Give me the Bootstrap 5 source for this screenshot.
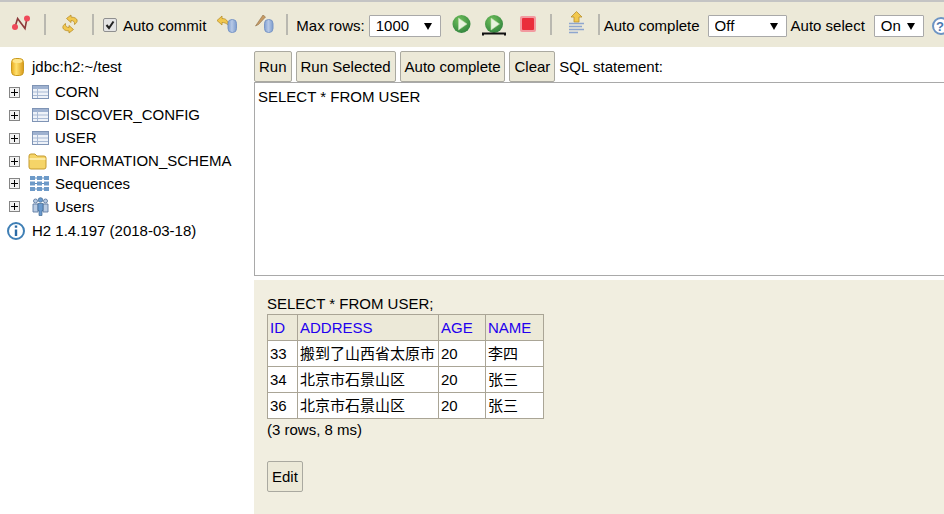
<!DOCTYPE html>
<html lang="en">
<head>
<meta charset="utf-8">
<title>H2 Console</title>
<link href="https://cdn.jsdelivr.net/npm/bootstrap@5.3.0/dist/css/bootstrap.min.css" rel="stylesheet">
<style>
html,body{height:100%;}
body{font:15px/20px "Liberation Sans",Arial,sans-serif;color:#000;background:#fff;overflow:hidden;}
.shell{height:514px;width:944px;}
.tbar{height:47px;background:#ece9d8;border-top:2px solid #c4c4c4;padding-top:3px;white-space:nowrap;}
.tbar svg{display:block;flex:none;}
.tbar .ico{margin-bottom:4px;}
.tbar .ico-low{margin-bottom:2px;}
.tbar .ico-up{margin-bottom:6px;}
.tbar .ico-help{margin-bottom:1px;}
.l4{margin-left:4px}.l5{margin-left:5px}.l6{margin-left:6px}.l8{margin-left:8px}.l9{margin-left:9px}.l10{margin-left:10px}.l11{margin-left:11px}.l12{margin-left:12px}.l13{margin-left:13px}.l14{margin-left:14px}.l16{margin-left:16px}.l17{margin-left:17px}
.vsep{width:2px;height:21px;background:#b9b8b0;flex:none;margin-bottom:4px;}
.chk{width:14px;height:14px;border:1px solid #8f8f8f;border-radius:2px;background:#e4e4e4;flex:none;margin-bottom:2px;}
.dd{position:relative;height:22px;background:#fff;border:1px solid #a9a9a9;flex:none;padding-left:6px;line-height:20px;border-radius:1px;}
.dd select{appearance:none;border:0;background:transparent;padding:0;width:100%;height:100%;font:inherit;outline:0;color:#000;}
.dd i{position:absolute;top:7px;right:8px;border-left:4px solid transparent;border-right:4px solid transparent;border-top:7px solid #000;}
.w72{width:72px}.w79{width:79px}.w50{width:50px}
.side{width:254px;flex:none;padding-top:7px;}
.node{display:flex;align-items:center;white-space:nowrap;}
.plus{position:relative;width:11px;height:11px;border:1px solid #858585;background:#f2f2f2;flex:none;margin-left:9px;}
.plus::before{content:"";position:absolute;left:1px;right:1px;top:4px;height:1px;background:#000;}
.plus::after{content:"";position:absolute;top:1px;bottom:1px;left:4px;width:1px;background:#000;}
.slot{width:35px;flex:none;display:flex;}
.root{width:32px;}
.p7{padding-left:7px}.p8{padding-left:8px}.p10{padding-left:10px}.p11{padding-left:11px}.p12{padding-left:12px}
.h22{height:22px}.h23{height:23px}.h24{height:24px}.h25{height:25px}.h26{height:26px}
.main{width:690px;flex:none;}
.btnrow{height:35px;padding-top:4px;gap:4px;}
.hbtn{height:31px;background:#ece9d8;border:1px solid #aaa9a0;border-radius:2px;padding:0 4px;font:inherit;color:#000;white-space:nowrap;flex:none;}
.sqlbox{display:block;width:700px;height:194px;border:1px solid #a9a9a9;border-right:0;padding:4px 3px;font:inherit;resize:none;outline:0;margin:0;color:#000;}
.res{height:234px;margin-top:4px;background:#f1eee0;padding:14px 13px 0;}
.grid{border-collapse:collapse;background:#fff;width:276px;table-layout:fixed;}
.grid th,.grid td{border:1px solid #aaa596;padding:0 2px;height:26px;font-weight:400;white-space:nowrap;overflow:visible;}
.grid th{background:#ece9d8;color:#2200ee;}
.c1{width:30px}.c2{width:141px}.c3{width:47px}.c4{width:58px}
.cjk{font-family:"Liberation Sans","Noto Sans CJK SC",sans-serif;font-size:15px;}
.stat{margin-top:1px}
.editb{margin-top:21px}
</style>
</head>
<body>
<svg width="0" height="0" class="position-absolute"><defs>
<g id="tbl"><rect x=".5" y=".5" width="16" height="13" fill="#eef2f8" stroke="#7f94b5"/><path d="M1 2.500H16" stroke="#9fb2d0" stroke-width="3"/><path d="M1 7H16M1 10.500H16M5.500 3V13" stroke="#a9bad4"/></g>
<linearGradient id="cyl" x1="0" x2="1" y1="0" y2="0"><stop offset="0" stop-color="#7f9fd2"/><stop offset=".45" stop-color="#b7c9e6"/><stop offset="1" stop-color="#7d9ccd"/></linearGradient>
<radialGradient id="grn" cx=".4" cy=".3" r=".8"><stop offset="0" stop-color="#6fbf5a"/><stop offset="1" stop-color="#2c7f3c"/></radialGradient>
<linearGradient id="gld" x1="0" x2="1" y1="0" y2="0"><stop offset="0" stop-color="#e8a91e"/><stop offset=".4" stop-color="#ffe06c"/><stop offset="1" stop-color="#d9991a"/></linearGradient>
</defs></svg>
<div class="shell d-flex flex-column">
  <div class="tbar d-flex align-items-center">
    <svg class="ico l11" width="22" height="18" viewBox="0 0 22 18"><path d="M4 12 6.600 3.600 14 13.600 16 3" fill="none" stroke="#8c3a3a" stroke-width="1.600"/><circle cx="4" cy="12" r="3" fill="#ef4a5a"/><circle cx="16" cy="3.500" r="3" fill="#ef4a5a"/></svg>
    <span class="vsep l11"></span>
    <svg class="ico l14" width="20" height="20" viewBox="0 0 20 20"><path d="M11 1 6.500 4.500 11 8.500V6.500C13.500 6.500 15 8 14.500 10.500 18.500 8 18.500 3.500 11 3Z" fill="#f2c84e" stroke="#b98f2c" stroke-width=".8"/><path d="M9 19 13.500 15.500 9 11.500V13.500C6.500 13.500 5 12 5.500 9.500 1.500 12 1.500 16.500 9 17Z" fill="#f2c84e" stroke="#b98f2c" stroke-width=".8"/></svg>
    <span class="vsep l12"></span>
    <span class="chk d-flex align-items-center justify-content-center l9"><svg width="10" height="10" viewBox="0 0 10 10"><path d="M1.500 5 4 8 8.500 1.500" fill="none" stroke="#222" stroke-width="2"/></svg></span>
    <span class="l6">Auto commit</span>
    <svg class="ico l10" width="22" height="18" viewBox="0 0 22 18"><path d="M1 5.500 6 1V3.500C10 3.500 12 5.500 12 10 10 8 8.500 7.500 6 7.500V10Z" fill="#f2c84e" stroke="#b98f2c" stroke-width=".8"/><rect x="12" y="4.500" width="8.500" height="13" rx="4" fill="url(#cyl)" stroke="#7a97c6"/></svg>
    <svg class="ico l17" width="19" height="18" viewBox="0 0 19 18"><path d="M8 0 10.500 2 3.500 9.500 .5 11Z" fill="#c79a63" stroke="#8f7048" stroke-width=".6"/><rect x="9.500" y="4.500" width="8.500" height="13" rx="4" fill="url(#cyl)" stroke="#7a97c6"/></svg>
    <span class="vsep l12"></span>
    <span class="l8">Max rows:</span>
    <span class="dd w72 l4"><select aria-label="Max rows"><option>1000</option></select><i></i></span>
    <svg class="ico l11" width="20" height="20" viewBox="0 0 20 20"><circle cx="9.500" cy="10" r="9" fill="url(#grn)"/><path d="M6.500 4 15 10 6.500 16Z" fill="#e8f3df" stroke="#bcd9aa" stroke-width=".6"/></svg>
    <svg class="ico-low l10" width="24" height="22" viewBox="0 0 24 22"><circle cx="12" cy="10" r="9" fill="url(#grn)"/><path d="M9 4 17.500 10 9 16Z" fill="#e8f3df" stroke="#bcd9aa" stroke-width=".6"/><path d="M1 21.500V19.500H23V21.500" fill="none" stroke="#111" stroke-width="2"/></svg>
    <svg class="ico l14" width="16" height="16" viewBox="0 0 16 16"><rect width="16" height="16" rx="2" fill="#f29aa0"/><rect x="2" y="2" width="12" height="12" rx="1" fill="#ea2e3c"/></svg>
    <span class="vsep l14"></span>
    <svg class="ico-up l16" width="17" height="24" viewBox="0 0 17 24"><path d="M8.500 .5 14 6H11V11H6V6H3Z" fill="#f2c84e" stroke="#b98f2c" stroke-width=".8"/><path d="M1 12.500H16M1 15.500H14M1 18.500H16M1 21.500H10" stroke="#8ea6cf" stroke-width="1.500"/></svg>
    <span class="vsep l13"></span>
    <span class="l4">Auto complete</span>
    <span class="dd w79 l8"><select aria-label="Auto complete"><option>Off</option></select><i></i></span>
    <span class="l4">Auto select</span>
    <span class="dd w50 l9"><select aria-label="Auto select"><option>On</option></select><i></i></span>
    <svg class="ico-help l8" width="12" height="20" viewBox="0 0 12 20"><circle cx="9" cy="10" r="8" fill="#fff" stroke="#6d94c4" stroke-width="2"/><text x="8" y="15" font-family="Liberation Sans" font-size="13" font-weight="700" text-anchor="middle" fill="#4a78b0">?</text></svg>
  </div>
  <div class="d-flex flex-grow-1">
    <div class="side">
      <div class="node h26"><span class="slot root p11"><svg width="13" height="18" viewBox="0 0 13 18"><rect x=".5" y=".5" width="12" height="17" rx="4" fill="url(#gld)" stroke="#c89a20"/><ellipse cx="6.500" cy="3" rx="5" ry="2" fill="#ffe58a"/></svg></span>jdbc:h2:~/test</div>
      <div class="node h24"><span class="plus"></span><span class="slot p12"><svg width="17" height="14" viewBox="0 0 17 14"><use href="#tbl"/></svg></span>CORN</div>
      <div class="node h22"><span class="plus"></span><span class="slot p12"><svg width="17" height="14" viewBox="0 0 17 14"><use href="#tbl"/></svg></span>DISCOVER_CONFIG</div>
      <div class="node h24"><span class="plus"></span><span class="slot p12"><svg width="17" height="14" viewBox="0 0 17 14"><use href="#tbl"/></svg></span>USER</div>
      <div class="node h22"><span class="plus"></span><span class="slot p8"><svg width="19" height="17" viewBox="0 0 19 17"><path d="M1 3Q1 1 3 1H7L9 3H16Q18 3 18 5V14Q18 16 16 16H3Q1 16 1 14Z" fill="#f5d468" stroke="#c59a2e"/><path d="M1.500 6H17.500" stroke="#fff2b8" stroke-width="1.500"/></svg></span>INFORMATION_SCHEMA</div>
      <div class="node h23"><span class="plus"></span><span class="slot p10"><svg width="19" height="15" viewBox="0 0 19 15"><path d="M4 2h12M4 7.500h12M4 13h12" stroke="#5f8fbf"/><path fill="#6d9ac8" d="M0 0h5v4H0zM7 0h5v4H7zM14 0h5v4h-5zM0 5.500h5v4H0zM7 5.500h5v4H7zM14 5.500h5v4h-5zM0 11h5v4H0zM7 11h5v4H7zM14 11h5v4h-5z"/></svg></span>Sequences</div>
      <div class="node h23"><span class="plus"></span><span class="slot p12"><svg width="17" height="19" viewBox="0 0 17 19"><g fill="#b9cbe2" stroke="#5f7ca3" stroke-width=".9"><circle cx="3.500" cy="4" r="2"/><path d="M1 7h5v8H1z"/><circle cx="13.500" cy="4" r="2"/><path d="M11 7h5v8h-5z"/></g><g fill="#6a9ace" stroke="#41698f" stroke-width=".7"><circle cx="8.500" cy="3" r="2.300"/><path d="M6 6.500h5v7h-1v5H7v-5H6z"/></g></svg></span>Users</div>
      <div class="node h25"><span class="slot root p7"><svg width="18" height="18" viewBox="0 0 18 18"><circle cx="9" cy="9" r="8" fill="#fff" stroke="#3f7fb5" stroke-width="2"/><path d="M9 3.500v2.200M9 7.500v6.500" stroke="#2a6aa5" stroke-width="2.400"/></svg></span>H2 1.4.197 (2018-03-18)</div>
    </div>
    <div class="main">
      <div class="d-flex align-items-center btnrow">
        <button class="hbtn" type="button">Run</button>
        <button class="hbtn" type="button">Run Selected</button>
        <button class="hbtn" type="button">Auto complete</button>
        <button class="hbtn" type="button">Clear</button>
        <span>SQL statement:</span>
      </div>
      <textarea class="sqlbox" aria-label="SQL statement">SELECT * FROM USER</textarea>
      <div class="res">
        <div>SELECT * FROM USER;</div>
        <table class="grid">
          <colgroup><col class="c1"><col class="c2"><col class="c3"><col class="c4"></colgroup>
          <thead><tr><th>ID</th><th>ADDRESS</th><th>AGE</th><th>NAME</th></tr></thead>
          <tbody>
            <tr><td>33</td><td class="cjk">搬到了山西省太原市</td><td>20</td><td class="cjk">李四</td></tr>
            <tr><td>34</td><td class="cjk">北京市石景山区</td><td>20</td><td class="cjk">张三</td></tr>
            <tr><td>36</td><td class="cjk">北京市石景山区</td><td>20</td><td class="cjk">张三</td></tr>
          </tbody>
        </table>
        <div class="stat">(3 rows, 8 ms)</div>
        <button class="hbtn editb" type="button">Edit</button>
      </div>
    </div>
  </div>
</div>
<script src="https://cdn.jsdelivr.net/npm/bootstrap@5.3.0/dist/js/bootstrap.bundle.min.js"></script>
</body>
</html>
